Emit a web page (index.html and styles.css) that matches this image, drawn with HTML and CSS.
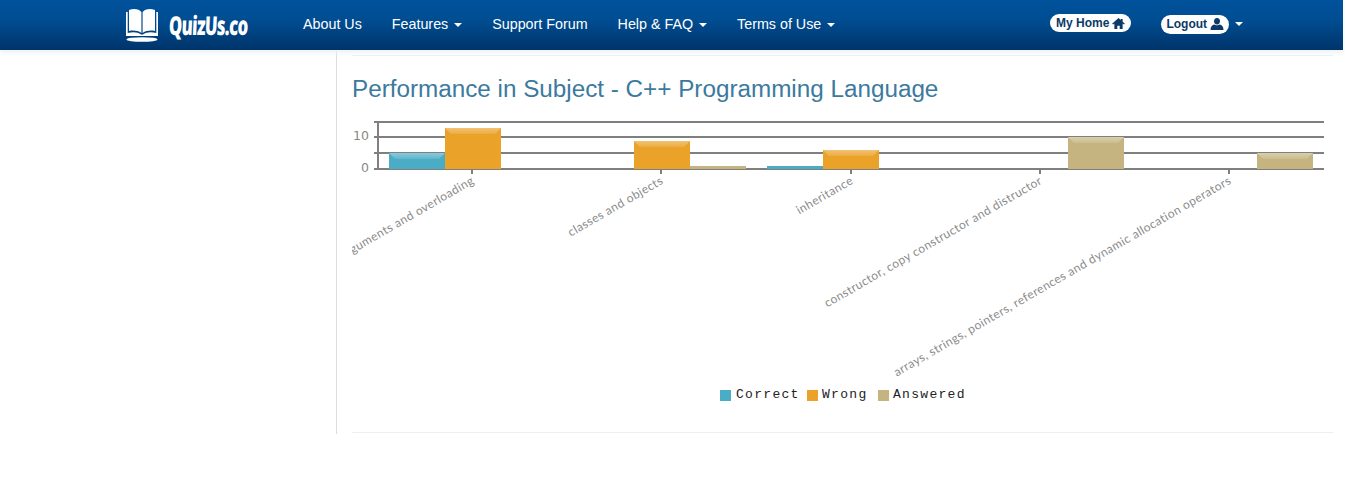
FILE: index.html
```html
<!DOCTYPE html>
<html lang="en">
<head>
    <meta charset="UTF-8">
    <link rel="stylesheet" href="styles.css">
    <title>Performance in Subject</title>
</head>
<body>
    <header class="topbar">
        <a class="brand" href="#">
            <svg class="brand-icon" viewBox="0 0 32 34" width="32" height="34">
                <path fill="#fff" d="M3 2 C8 0 13 1 15.400 4 L15.400 25 C12 22.500 7 22 3 23 Z M29 2 C24 0 19 1 16.600 4 L16.600 25 C20 22.500 25 22 29 23 Z"/>
                <path fill="#fff" d="M0 4 L1.700 4 L1.700 25 C7 23.500 12 24 15 26.500 L17 26.500 C20 24 25 23.500 30.300 25 L30.300 4 L32 4 L32 28 L0 28 Z"/>
                <ellipse fill="#fff" cx="16" cy="31.500" rx="15.500" ry="2.300"/>
            </svg>
            <span class="brand-name">QuizUs.co</span>
        </a>
        <nav class="menu">
            <a href="#">About Us</a>
            <a href="#">Features <i class="caret"></i></a>
            <a href="#">Support Forum</a>
            <a href="#">Help &amp; FAQ <i class="caret"></i></a>
            <a href="#">Terms of Use <i class="caret"></i></a>
        </nav>
        <div class="account">
            <a class="pill pill-home" href="#">My Home
                <svg viewBox="0 0 14 12" width="13" height="11"><path fill="#0b3a68" d="M7 0 L9.500 2.200 L9.500 1 L11.500 1 L11.500 4 L14 6.200 L12.800 7 L11.500 6 L11.500 12 L8.300 12 L8.300 8.500 L5.700 8.500 L5.700 12 L2.500 12 L2.500 6 L1.200 7 L0 6.200 Z"/></svg>
            </a>
            <a class="pill pill-logout" href="#">Logout
                <svg viewBox="0 0 14 12" width="14" height="12"><path fill="#0b3a68" d="M7 0 C9 0 10 1.500 10 3.300 C10 5 9 6.500 7 6.500 C5 6.500 4 5 4 3.300 C4 1.500 5 0 7 0 Z M4.500 6.500 C5.500 7.500 8.500 7.500 9.500 6.500 C12 7 13.500 8.500 13.500 12 L0.500 12 C0.500 8.500 2 7 4.500 6.500 Z"/></svg>
            </a>
            <i class="caret"></i>
        </div>
    </header>

    <div class="page">
        <aside class="sidebar"></aside>
        <main class="content">
            <h2 class="title">Performance in Subject - C++ Programming Language</h2>
            <svg class="chart" viewBox="352 115 981 300" width="981" height="300">
                <defs>
                    <linearGradient id="bevel" x1="0" y1="0" x2="0" y2="1">
                        <stop class="bevel-from" offset="0"/>
                        <stop class="bevel-to" offset="1"/>
                    </linearGradient>
                </defs>
                <g class="grid">
                    <path d="M374 122H1324M374 137H1324M374 153H1324M374 169H1324"/>
                    <path d="M378 122V169"/>
                    <path d="M472 169V174M661 169V174M851 169V174M1040 169V174M1229 169V174"/>
                </g>
                <g class="axis-y">
                    <text x="369" y="140">10</text>
                    <text x="369" y="172">0</text>
                </g>

                <rect class="correct" x="389" y="153" width="56" height="16"/>
                <path class="bevel" d="M389 153H445L439 159H395Z"/>
                <rect class="wrong" x="445" y="128" width="56" height="41"/>
                <path class="bevel" d="M445 128H501L495 134H451Z"/>

                <rect class="wrong" x="634" y="141" width="56" height="28"/>
                <path class="bevel" d="M634 141H690L684 147H640Z"/>
                <rect class="answered" x="690" y="166" width="56" height="3"/>

                <rect class="correct" x="767" y="166" width="56" height="3"/>
                <rect class="wrong" x="823" y="150" width="56" height="19"/>
                <path class="bevel" d="M823 150H879L873 156H829Z"/>

                <rect class="answered" x="1068" y="137" width="56" height="32"/>
                <path class="bevel" d="M1068 137H1124L1118 143H1074Z"/>

                <rect class="answered" x="1257" y="153" width="56" height="16"/>
                <path class="bevel" d="M1257 153H1313L1307 159H1263Z"/>

                <g class="labels">
                    <text transform="translate(475 183) rotate(-30)">arguments and overloading</text>
                    <text transform="translate(664 183) rotate(-30)">classes and objects</text>
                    <text transform="translate(854 183) rotate(-30)">inheritance</text>
                    <text transform="translate(1043 183) rotate(-30)">constructor, copy constructor and distructor</text>
                    <text transform="translate(1232 183) rotate(-30)">arrays, strings, pointers, references and dynamic allocation operators</text>
                </g>

                <g class="legend">
                    <rect class="correct" x="720" y="390" width="11" height="11"/>
                    <text x="736" y="398">Correct</text>
                    <rect class="wrong" x="807" y="390" width="11" height="11"/>
                    <text x="822" y="398">Wrong</text>
                    <rect class="answered" x="878" y="390" width="11" height="11"/>
                    <text x="893" y="398">Answered</text>
                </g>
            </svg>
            <hr class="rule">
        </main>
    </div>
</body>
</html>
```

FILE: styles.css
```css
*{box-sizing:border-box;}
body{margin:0;background-color:#fff;font-family:"Liberation Sans",Arial,sans-serif;}
a{text-decoration:none;color:inherit;}

.topbar{position:relative;display:flex;align-items:center;height:50px;margin-right:2px;padding:0 0 2px 126px;color:#fff;background:linear-gradient(#00529b,#004d92 40%,#00346a);box-shadow:0 3px 4px #eef3f7;}
.brand{display:flex;align-items:center;gap:11px;width:177px;margin-top:1px;}
.brand-name{font-family:"Open Sans",sans-serif;font-size:26px;font-weight:800;letter-spacing:-1px;display:inline-block;transform:scaleX(.645) skewX(-4deg);transform-origin:left center;white-space:nowrap;}

.menu{display:flex;gap:30px;font-size:14.300px;}
.caret{display:inline-block;width:0;height:0;margin-left:2px;vertical-align:middle;border-top:4px solid #fff;border-left:4px solid transparent;border-right:4px solid transparent;}

.account{display:flex;align-items:center;margin-left:215px;}
.pill{display:flex;align-items:center;justify-content:center;gap:3px;background-color:#fff;color:#0b3a68;font-size:12px;font-weight:bold;border-radius:10px;}
.pill-home{width:81px;height:18px;margin-right:30px;margin-top:-2px;}
.pill-logout{width:68px;height:19px;}
.account .caret{margin-left:6px;}

.page{display:flex;height:384px;}
.sidebar{width:337px;border-right:1px solid #ddd;}
.content{flex:1;padding:5px 12px 0 15px;}
.title{margin:0;padding:17px 0 0;border-top:1px solid #eee;font-size:24.250px;font-weight:normal;line-height:32px;color:#3b7a9e;}

.chart{display:block;margin-top:10px;}
.grid path{fill:none;stroke:#7f7f7f;stroke-width:2;}
.axis-y text{font-family:"DejaVu Sans",sans-serif;font-size:12.500px;fill:#888;text-anchor:end;}
.labels text{font-family:Lato,sans-serif;font-size:12px;letter-spacing:.4px;fill:#8a8a8a;text-anchor:end;}
.legend text{font-family:"Liberation Mono",monospace;font-size:13px;letter-spacing:1.300px;fill:#222;}

.correct{fill:#4bacc6;}
.wrong{fill:#eaa228;}
.answered{fill:#c5b47f;}
.bevel{fill:url(#bevel);}
.bevel-from{stop-color:#fff;stop-opacity:.35;}
.bevel-to{stop-color:#fff;stop-opacity:.12;}

.rule{margin:17px 0 0;border:0;border-top:1px solid #eee;}
```
